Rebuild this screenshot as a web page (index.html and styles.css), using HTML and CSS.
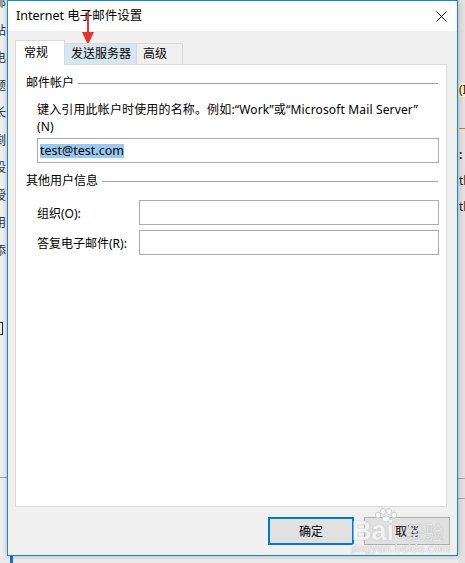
FILE: index.html
```html
<!DOCTYPE html>
<html lang="zh-CN">
<head>
    <meta charset="UTF-8">
    <title>Internet 电子邮件设置</title>
    <link rel="stylesheet" href="styles.css">
</head>
<body>

    <!-- окно позади диалога -->
    <div class="bg-left">
        <div class="bg-chars">邮<br>站<br>电<br>题<br>长<br>剩<br>设<br>授<br>用<br>添</div>
        <div class="bg-box"></div>
        <div class="bg-line"></div>
    </div>
    <div class="bg-right">
        <div class="bg-frag f1">(I</div>
        <div class="bg-frag f2">—</div>
        <div class="bg-frag f3">:</div>
        <div class="bg-frag f4">tle</div>
        <div class="bg-frag f5">tle</div>
        <div class="bg-rline r1"></div>
        <div class="bg-rline r2"></div>
    </div>
    <div class="bg-bottom"></div>

    <div class="dialog">
        <div class="titlebar">
            <span class="title">Internet 电子邮件设置</span>
            <svg class="close" width="11" height="11" viewBox="0 0 11 11">
                <path d="M0.5 0.5 L10.5 10.5 M10.5 0.5 L0.5 10.5" stroke="#000" stroke-width="1" fill="none"/>
            </svg>
        </div>

        <div class="dialog-body">
            <div class="tabs">
                <div class="tab active">常规</div>
                <div class="tab hover">发送服务器</div>
                <div class="tab last">高级</div>
            </div>

            <div class="panel">
                <div class="group-title"><span>邮件帐户</span></div>
                <div class="hint">键入引用此帐户时使用的名称。例如:“Work”或“Microsoft Mail Server”<br>(N)</div>
                <div class="textbox wide"><span class="sel">test@test.com</span></div>

                <div class="group-title second"><span>其他用户信息</span></div>
                <div class="field-row first">
                    <label>组织(O):</label>
                    <div class="textbox"></div>
                </div>
                <div class="field-row">
                    <label>答复电子邮件(R):</label>
                    <div class="textbox"></div>
                </div>
            </div>

            <div class="buttons">
                <button class="btn focus">确定</button>
                <button class="btn">取消</button>
            </div>
        </div>
    </div>

    <!-- красная стрелка-пометка -->
    <svg class="arrow" width="14" height="36" viewBox="0 0 14 36">
        <path d="M7 0 L7 22" stroke="#e8322f" stroke-width="2" fill="none"/>
        <path d="M1 20 L13 20 L7 33 Z" fill="#e8322f"/>
    </svg>

    <!-- водяной знак -->
    <div class="watermark">
        <svg class="paw" width="24" height="14" viewBox="0 0 24 14">
            <g fill="#fff" stroke="#c9c9c9" stroke-width="1">
                <ellipse cx="4" cy="7" rx="2.5" ry="3"/>
                <ellipse cx="9" cy="3.5" rx="2.5" ry="3"/>
                <ellipse cx="15" cy="3.5" rx="2.5" ry="3"/>
                <ellipse cx="20" cy="7" rx="2.5" ry="3"/>
                <ellipse cx="12" cy="11" rx="4" ry="3"/>
            </g>
        </svg>
        <div class="wm-main"><span class="wm-bai">Bai</span><span class="wm-jy">经验</span></div>
        <div class="wm-url">jingyan.baidu.com</div>
    </div>

</body>
</html>
```

FILE: styles.css
```css
* {
    box-sizing: border-box;
    margin: 0;
    padding: 0;
}

body {
    width: 465px;
    height: 563px;
    position: relative;
    overflow: hidden;
    background-color: #ebebeb;
    font-family: "Noto Sans", "Noto Sans CJK SC", sans-serif;
    font-size: 12px;
    color: #000;
}

/* фон: другое окно */
.bg-left {
    position: absolute;
    left: 0;
    top: 0;
    width: 8px;
    height: 556px;
    background-color: #f0f0f0;
    overflow: hidden;
}

.bg-chars {
    position: absolute;
    left: -6px;
    top: -11px;
    width: 14px;
    line-height: 27.5px;
    font-size: 12px;
    color: #333;
}

.bg-box {
    position: absolute;
    left: -6px;
    top: 322px;
    width: 9px;
    height: 13px;
    border: 1px solid #222;
}

.bg-line {
    position: absolute;
    left: 0;
    top: 477px;
    width: 8px;
    height: 1px;
    background-color: #a0a0a0;
}

.bg-right {
    position: absolute;
    left: 458px;
    top: 0;
    width: 7px;
    height: 563px;
    background-color: #e2e2e2;
    overflow: hidden;
}

.bg-frag {
    position: absolute;
    left: 1px;
    font-size: 12px;
    line-height: 14px;
    color: #222;
    white-space: nowrap;
}

.f1 { top: 83px; background-color: #fff3c4; }
.f2 { top: 121px; color: #c8781e; }
.f3 { top: 148px; font-weight: 700; }
.f4 { top: 174px; }
.f5 { top: 200px; }

.bg-rline {
    position: absolute;
    left: 0;
    width: 7px;
    height: 1px;
    background-color: #a8a8a8;
}

.r1 { top: 478px; }
.r2 { top: 498px; }

.bg-bottom {
    position: absolute;
    left: 10px;
    top: 556px;
    width: 3px;
    height: 7px;
    background-color: #1a6fc0;
}

/* диалог */
.dialog {
    position: absolute;
    left: 7px;
    top: 0;
    width: 451px;
    height: 556px;
    border: 1px solid #1883d7;
    background-color: #f0f0f0;
    box-shadow: 0 0 6px rgba(0, 0, 0, 0.25);
    display: flex;
    flex-direction: column;
}

.titlebar {
    height: 30px;
    background-color: #fff;
    display: flex;
    align-items: center;
    justify-content: space-between;
    padding: 0 10px 0 8px;
}

.title {
    font-size: 12.5px;
    line-height: 16px;
}

.close {
    display: block;
}

.dialog-body {
    flex: 1;
    padding: 9px 10px 0 7px;
}

.tabs {
    display: flex;
    align-items: flex-end;
    height: 25px;
    margin-bottom: -1px;
    position: relative;
    z-index: 1;
}

.tab {
    height: 22px;
    line-height: 20px;
    padding-left: 6px;
    border: 1px solid #d9d9d9;
    border-left: none;
    background-color: #f0f0f0;
    white-space: nowrap;
}

.tab.active {
    width: 50px;
    height: 25px;
    line-height: 24px;
    padding-left: 8px;
    border-left: 1px solid #d9d9d9;
    border-bottom: none;
    background-color: #fff;
}

.tab.hover {
    width: 72px;
    border-left: none;
    background-color: #d8e6f2;
}

.tab.last {
    width: 46px;
}

.panel {
    height: 443px;
    background-color: #fff;
    border: 1px solid #d9d9d9;
    padding: 10px 8px 0 10px;
}

.group-title {
    display: flex;
    align-items: center;
    height: 16px;
    line-height: 16px;
}

.group-title::after {
    content: "";
    flex: 1;
    height: 1px;
    margin-left: 4px;
    background-color: #a0a0a0;
}

.group-title.second {
    margin-top: 10px;
}

.hint {
    margin: 10px 0 0 11px;
    line-height: 17px;
    letter-spacing: 0.15px;
    white-space: nowrap;
}

.textbox {
    height: 25px;
    border: 1px solid #ababab;
    background-color: #fff;
    padding-left: 2px;
    display: flex;
    align-items: center;
}

.textbox.wide {
    margin: 3px -1px 0 11px;
}

.sel {
    background-color: #99c9ef;
    line-height: 14px;
    font-size: 12.5px;
}

.field-row {
    display: flex;
    align-items: center;
    margin: 5px -1px 0 11px;
}

.field-row.first {
    margin-top: 11px;
}

.field-row label {
    width: 102px;
}

.field-row .textbox {
    flex: 1;
}

.buttons {
    display: flex;
    justify-content: flex-end;
    gap: 10px;
    margin-top: 10px;
    margin-right: -3px;
}

.btn {
    width: 86px;
    height: 28px;
    font-family: inherit;
    font-size: 12px;
    color: #000;
    background-color: #e1e1e1;
    border: 1px solid #adadad;
}

.btn.focus {
    border: 2px solid #0078d7;
}

/* пометка и водяной знак */
.arrow {
    position: absolute;
    left: 81px;
    top: 12px;
}

.watermark {
    position: absolute;
    left: 350px;
    top: 508px;
    width: 100px;
    height: 46px;
    pointer-events: none;
}

.paw {
    position: absolute;
    left: 24px;
    top: 0;
}

.wm-main {
    position: absolute;
    left: 2px;
    top: 9px;
    white-space: nowrap;
    font-family: "Liberation Sans", sans-serif;
    font-size: 27px;
    font-weight: 700;
    line-height: 28px;
    color: rgba(255, 255, 255, 0.85);
    text-shadow: 0 0 1px #b5b5b5, 0 0 1px #b5b5b5;
}

.wm-jy {
    margin-left: 12px;
    font-family: "Noto Sans CJK SC", sans-serif;
    font-size: 19px;
    font-weight: 400;
    color: rgba(255, 255, 255, 0.7);
}

.wm-url {
    position: absolute;
    left: 2px;
    top: 34px;
    font-family: "Liberation Sans", sans-serif;
    font-size: 11px;
    letter-spacing: 0.6px;
    color: rgba(255, 255, 255, 0.85);
    text-shadow: 0 0 1px #b5b5b5, 0 0 1px #b5b5b5;
}
```
